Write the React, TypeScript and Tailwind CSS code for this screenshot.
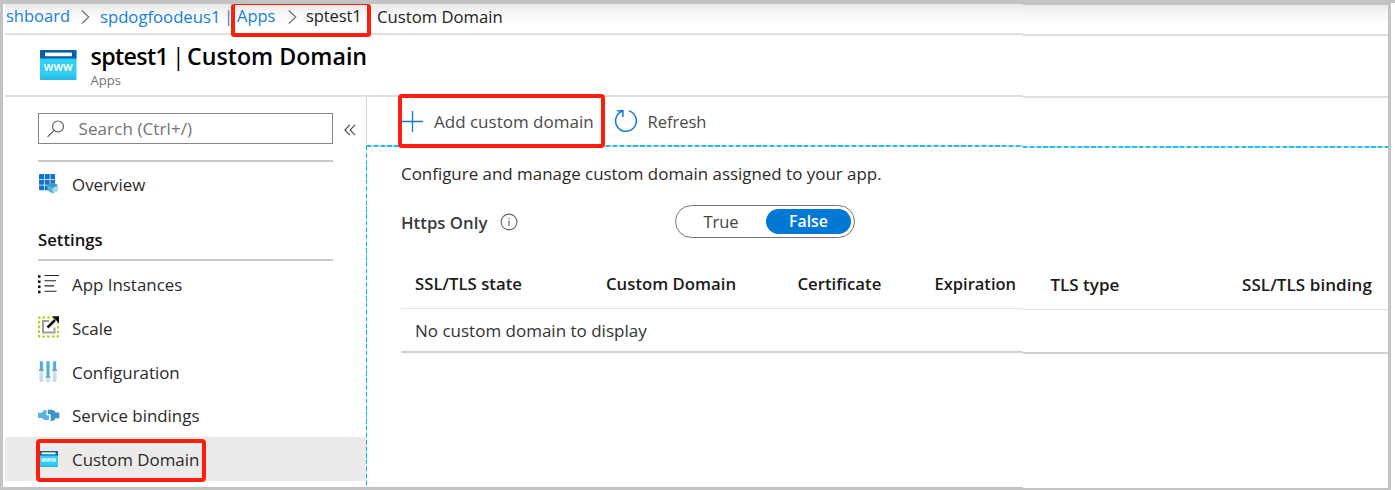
import type { ReactNode } from "react";

function Chevron() {
  return (
    <svg width="9" height="14" viewBox="0 0 9 14" fill="none" stroke="#6b6b6b" strokeWidth="1.1" className="shrink-0">
      <path d="M0.8 0.5 7.8 7 0.8 13.5" />
    </svg>
  );
}

function DomainIcon({ className }: { className: string }) {
  return (
    <svg viewBox="0 0 36 30" preserveAspectRatio="none" className={className}>
      <defs>
        <linearGradient id="sky" x1="0" y1="0" x2="0" y2="1">
          <stop offset="0" stopColor="#32d4f5" />
          <stop offset="0.8" stopColor="#32cdf2" />
          <stop offset="1" stopColor="#27b6e0" />
        </linearGradient>
      </defs>
      <rect width="36" height="30" rx="1" fill="url(#sky)" />
      <path d="M1 0H35a1 1 0 0 1 1 1V8.500H0V1a1 1 0 0 1 1-1Z" fill="#0b5fa8" />
      <rect x="5" y="2.600" width="26.500" height="3.600" fill="#fff" />
      <text x="18" y="21.300" textAnchor="middle" textLength="28.500" lengthAdjust="spacingAndGlyphs" fill="#fff" className="text-[12px] font-semibold">
        www
      </text>
    </svg>
  );
}

function OverviewIcon() {
  return (
    <svg width="20" height="20" viewBox="0 0 20 20">
      <path
        d="M1 0H5V5H0V1a1 1 0 0 1 1-1ZM5.700 0h5v5h-5ZM11.400 0H15a1 1 0 0 1 1 1V5H11.400ZM0 5.700H5v5H0ZM5.700 5.700h5v5h-5ZM11.400 5.700H16v5H11.400ZM0 11.400H5v4.800H1a1 1 0 0 1-1-1ZM5.700 11.400h5v4.800h-5Z"
        fill="#0f74cf"
      />
      <path d="M13.700 8.500 19 11.300V16.600L13.700 19.600 8.400 16.600V11.300Z" fill="#57b1dc" />
      <path d="M13.700 8.500 19 11.300 13.700 14 8.400 11.300Z" fill="#3c97c4" />
      <path d="M19 11.300V16.600L13.700 19.600V14Z" fill="#a5d8ee" />
    </svg>
  );
}

function InstancesIcon() {
  return (
    <svg width="22" height="20" viewBox="0 0 22 20">
      <path d="M0 1.200h2.500v2.500H0ZM0 6.400h2.500v2.500H0ZM0 11.600h2.500v2.500H0ZM0 16.800h2.500v2.500H0Z" fill="#111" />
      <path d="M6.500 1.500H21M6.500 6.700H18M6.500 11.900H16M6.500 17.300H18.500" stroke="#222" strokeWidth="1.100" />
    </svg>
  );
}

function ScaleIcon() {
  return (
    <svg width="22" height="22" viewBox="0 0 22 22" fill="none">
      <rect x="1" y="1.500" width="19" height="19" stroke="#b4d420" strokeWidth="2" strokeDasharray="2.750 2" strokeDashoffset="1.300" />
      <path d="M11 5H5V16.500H16.500V11.500" stroke="#9d9d9d" strokeWidth="1.900" />
      <path d="M9.500 11.500 17 4" stroke="#111" strokeWidth="2.500" />
      <path d="M14 0.300H21V7.300L18.800 5.100 16.200 2.500Z" fill="#111" />
    </svg>
  );
}

function SlidersIcon() {
  return (
    <svg width="20" height="21" viewBox="0 0 20 21">
      <path d="M1.500 0h3.800v21H1.500ZM8.100 0h3.800v21H8.100ZM14.700 0h3.800v21h-3.800Z" fill="#c0e2f0" />
      <path d="M2 0.500h2.800v8H2ZM8.600 0.500h2.800v15H8.600ZM15.200 0.500h2.800v8h-2.800Z" fill="#52b0d8" />
      <path d="M1.100 9h4.600M7.700 15.800h4.600M14.300 9h4.600" stroke="#7c8890" strokeWidth="1.300" />
    </svg>
  );
}

function BindingsIcon() {
  return (
    <svg width="22" height="13" viewBox="0 0 22 13">
      <path d="M0 3.700H3.800L6 1.100H8.500V6.300H11V11H6L3.800 9H0Z" fill="#59b4d9" />
      <path d="M9.600 0.800H14.500L17.200 2.500V3.500H21.300V9.300H17.200V10.500L14.600 12H12.500V5.200H9.600Z" fill="#3a96c8" />
      <path d="M9.100 0.800V5.700H12V11.500" stroke="#fff" strokeWidth="0.700" fill="none" />
    </svg>
  );
}

function NavItem({ icon, label, active = false }: { icon: ReactNode; label: string; active?: boolean }) {
  return (
    <li className={active ? "flex h-[43.800px] items-center bg-[#edebe9]" : "flex h-[43.800px] items-center"}>
      <span className="flex w-[67px] shrink-0 items-center pl-[32.500px]">{icon}</span>
      <span className="pt-[2px] text-[16.900px] text-[#2b2a29]">{label}</span>
    </li>
  );
}

function Sidebar() {
  return (
    <nav className="w-[361px] shrink-0">
      <div className="flex pl-[33px] pt-4">
        <div className="flex h-[31px] w-[295px] items-center border border-[#858585] pl-[7.500px]">
          <svg width="18" height="18" viewBox="0 0 18 18" fill="none" stroke="#555" strokeWidth="1.100">
            <circle cx="11" cy="6.500" r="5.500" />
            <path d="M7.100 10.400 0.600 16.900" />
          </svg>
          <span className="ml-[14px] text-[17px] tracking-[0.100px] text-[#737373]">Search (Ctrl+/)</span>
        </div>
        <svg width="12" height="12" viewBox="0 0 12 12" fill="none" stroke="#444" strokeWidth="1.100" className="ml-[10.500px] mt-[11px]">
          <path d="M5.800 0.800 0.900 6 5.800 11.200M11 0.800 6.100 6 11 11.200" />
        </svg>
      </div>
      <div className="ml-[33px] mt-4 h-[1.500px] w-[295px] bg-[#c9c9c9]" />
      <ul className="pt-[0.500px]">
        <NavItem icon={<span className="pl-[1.500px]"><OverviewIcon /></span>} label="Overview" />
      </ul>
      <h2 className="ml-[33px] mt-[21px] h-[25px] text-[16.700px] font-semibold leading-[25px] text-[#111]">Settings</h2>
      <div className="ml-[33px] mt-[7.500px] h-[1.500px] w-[295px] bg-[#c9c9c9]" />
      <ul className="pt-px">
        <NavItem icon={<InstancesIcon />} label="App Instances" />
        <NavItem icon={<ScaleIcon />} label="Scale" />
        <NavItem icon={<SlidersIcon />} label="Configuration" />
        <NavItem icon={<BindingsIcon />} label="Service bindings" />
        <NavItem icon={<span className="pl-[1.500px]"><DomainIcon className="h-[16px] w-[19px]" /></span>} label="Custom Domain" active />
      </ul>
    </nav>
  );
}

const dashX =
  "h-0.5 bg-[repeating-linear-gradient(90deg,#19bdf0_0px,#19bdf0_4.300px,#c4dbe2_4.300px,#c4dbe2_6.830px)]";
const dashY =
  "w-px flex-1 bg-[repeating-linear-gradient(180deg,#00b4f0_0px,#00b4f0_4.300px,#c9e4ec_4.300px,#c9e4ec_6.830px)]";
const headerFade = "bg-[linear-gradient(180deg,#e9e9e9_0px,#f8f8f8_10px,#ffffff_20px)]";

function Breadcrumb() {
  return (
    <div className={`flex h-[31px] items-center whitespace-pre border-b-2 border-[#dedede] pb-[4px] text-[16.500px] ${headerFade}`}>
      <span className="w-[76px] shrink-0 pl-px text-[#1581d8]">shboard</span>
      <span className="w-[19px] shrink-0"><Chevron /></span>
      <span className="w-[124px] shrink-0 text-[16.700px] text-[#1581d8]">spdogfoodeus1</span>
      <span className="w-[13px] shrink-0 text-[#1581d8]">|</span>
      <span className="w-[51px] shrink-0 text-[#1581d8]">Apps</span>
      <span className="w-[18px] shrink-0"><Chevron /></span>
      <span className="w-[71px] shrink-0 tracking-[-0.100px] text-[#222]">sptest1</span>
      <span className="text-[16.700px] text-[#222]">Custom Domain</span>
    </div>
  );
}

function Toolbar() {
  return (
    <div className="flex h-[48px] items-center text-[17px] text-[#4a4a4a]">
      <svg width="21" height="21" viewBox="0 0 21 21" stroke="#1079d6" strokeWidth="1.300" className="ml-[35px]">
        <path d="M0 10.500H21M10.500 0V21" />
      </svg>
      <span className="ml-[11px] w-[180px] pt-[2px]">Add custom domain</span>
      <svg width="24" height="24" viewBox="0 0 24 24" fill="none" stroke="#1079d6" strokeWidth="1.500">
        <path d="M14.800 1.900A10.400 10.400 0 1 1 8.200 2.200M3.200 1.800H8.900V8" />
      </svg>
      <span className="ml-[9.500px] pt-[2px] text-[16.500px]">Refresh</span>
    </div>
  );
}

function Content() {
  return (
    <main className="flex min-w-0 flex-1 flex-col">
      <Toolbar />
      <div className={dashX} />
      <div className="pl-[34px]">
        <p className="mt-[14px] h-[26px] text-[16.930px] leading-[26px] text-[#2b2a29]">
          Configure and manage custom domain assigned to your app.
        </p>
        <div className="mt-[18px] flex h-[33px] items-center">
          <span className="w-[87px] pt-[2px] text-[16.800px] font-semibold text-[#3a3a3a]">Https Only</span>
          <svg width="18" height="18" viewBox="0 0 18 18" fill="none" stroke="#666" className="ml-[12px]">
            <circle cx="9" cy="9" r="7.900" strokeWidth="1.100" />
            <path d="M9 7.700V13M9 5V6.300" strokeWidth="1.200" />
          </svg>
          <div className="ml-[156.500px] flex h-[33px] w-[180px] items-center rounded-full border-[1.500px] border-[#737373] text-[16.500px]">
            <span className="w-[90px] pl-px pt-px text-center text-[#444]">True</span>
            <span className="flex h-[25px] w-[85px] items-center justify-center rounded-full bg-[#0078d4] text-white">
              <span className="pl-px pt-px text-[15.800px] font-semibold">False</span>
            </span>
          </div>
        </div>
        <div className="mt-[22px] flex h-[48px] items-center pl-[14px] text-[16.750px] font-semibold text-[#1b1a19]">
          <span className="w-[191px]">SSL/TLS state</span>
          <span className="w-[191.500px]">Custom Domain</span>
          <span className="w-[137px]">Certificate</span>
          <span className="text-[16.500px]">Expiration</span>
        </div>
        <div className="h-px bg-[#e3e3e3]" />
        <div className="flex h-[42px] items-center pl-[14px] pt-[2px] text-[17px] text-[#333]">No custom domain to display</div>
        <div className="h-[2px] bg-[#d2d2d2]" />
      </div>
    </main>
  );
}

function RightColumns() {
  return (
    <div className="w-[365px] shrink-0 border-t border-[#c3c3c3] bg-white">
      <div className={`h-[31px] border-b-2 border-[#dedede] ${headerFade}`} />
      <div className="h-[62px] border-b-2 border-[#dedede]" />
      <div className="h-[48px]" />
      <div className={dashX} />
      <div className="mt-[113px] flex h-[48px] items-center pl-[27.500px] text-[17px] font-semibold text-[#1b1a19]">
        <span className="w-[191.500px]">TLS type</span>
        <span className="tracking-[0.070px]">SSL/TLS binding</span>
      </div>
      <div className="h-px bg-[#e3e3e3]" />
      <div className="h-[42px]" />
      <div className="h-[2px] bg-[#d2d2d2]" />
    </div>
  );
}

export default function App() {
  return (
    <div className="relative flex h-[490px] w-[1395px] overflow-hidden bg-white font-['Open_Sans','Noto_Sans',sans-serif] whitespace-nowrap">
      <div className="flex h-full w-[1391px] bg-[#c3c3c3] pl-[3px] pr-[3px] pt-[4px]">
        <div className="h-[483px] w-[1020px] bg-white pl-[2px]">
          <Breadcrumb />
          <header className="flex h-[62px] border-b-2 border-[#dedede] pl-[35px]">
            <DomainIcon className="mt-[15px] h-[30px] w-[36.500px]" />
            <div className="pl-[14px]">
              <h1 className="mt-[6px] flex h-[30px] text-[23.200px] font-semibold leading-[30px] text-black">
                <span className="w-[81.500px] tracking-[-0.600px]">sptest1</span>
                <span className="w-[15px] font-normal">|</span>
                <span>Custom Domain</span>
              </h1>
              <p className="h-[18px] text-[13px] leading-[18px] text-[#737373]">Apps</p>
            </div>
          </header>
          <div className="flex h-[390px]">
            <Sidebar />
            <div className="flex w-px flex-col">
              <div className="h-[49px] bg-[#d2d2d2]" />
              <div className={dashY} />
            </div>
            <Content />
          </div>
        </div>
        <div className="h-[484px] bg-white">
          <RightColumns />
        </div>
      </div>
      <div className="absolute left-[1391px] top-0 h-[3px] w-[4px] bg-[#c3c3c3]" />
      <div className="absolute left-[231px] top-[4px] h-[33px] w-[140px] rounded-[3px] border-4 border-t-[1.500px] border-[#ff1d0d]" />
      <div className="absolute left-[398px] top-[94px] h-[54px] w-[206.500px] rounded-[4px] border-4 border-[#ff1d0d]" />
      <div className="absolute left-[35.500px] top-[439px] h-[43px] w-[170px] rounded-[4px] border-4 border-[#ff1d0d]" />
    </div>
  );
}
